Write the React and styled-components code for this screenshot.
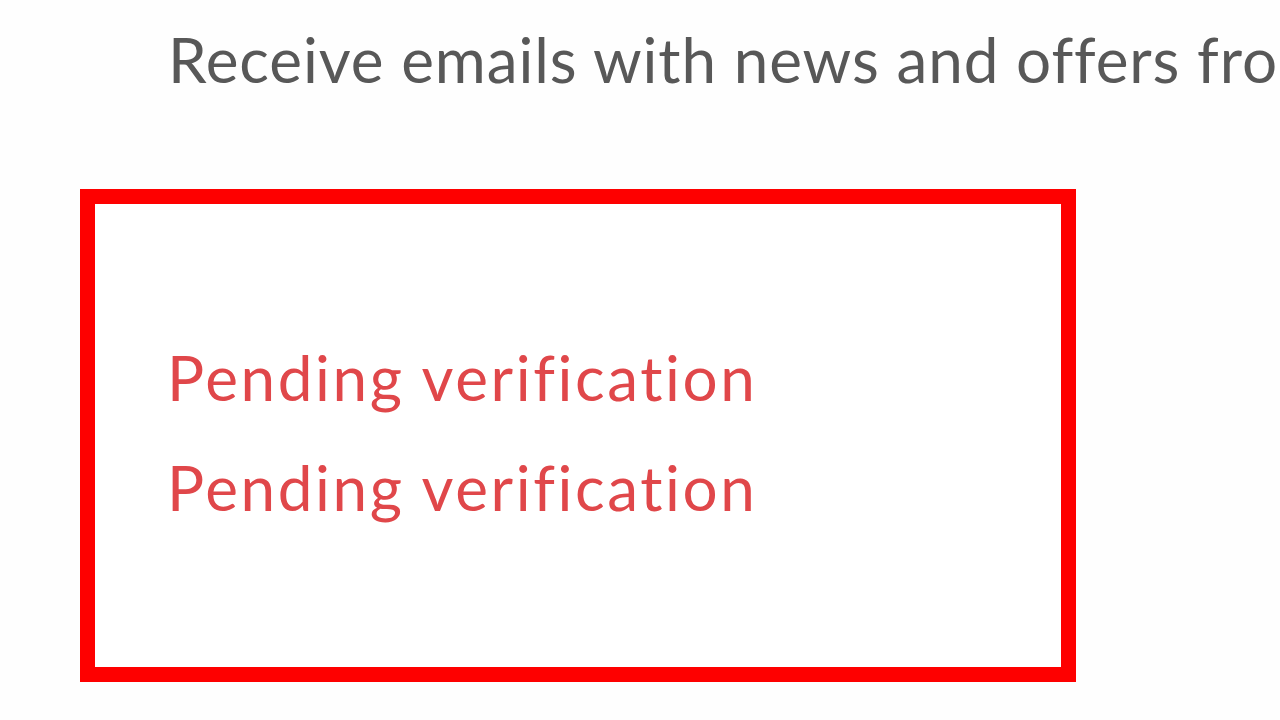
import styled, { createGlobalStyle } from "styled-components";

const GlobalStyle = createGlobalStyle`
  html, body {
    margin: 0;
    padding: 0;
    background: #fefefe;
    overflow: hidden;
  }
  body {
    font-family: Lato, "Noto Sans", sans-serif;
  }
`;

export default function App() {
  return (
    <>
      <GlobalStyle />
      <StyledPage>
        <StyledOptIn>Receive emails with news and offers from us</StyledOptIn>
        <StyledHighlight>
          <StyledStatus>Pending verification</StyledStatus>
          <StyledStatus>Pending verification</StyledStatus>
        </StyledHighlight>
      </StyledPage>
    </>
  );
}

// Styled components

const StyledPage = styled.div`
  width: 1280px;
  height: 720px;
  overflow: hidden;
  display: flex;
  flex-direction: column;
`;

const StyledOptIn = styled.p`
  margin: 20px 0 0 168px;
  font-size: 62px;
  line-height: 78px;
  font-weight: 400;
  letter-spacing: 0.9px;
  color: #585858;
  white-space: nowrap;
  font-variant-ligatures: no-common-ligatures;
`;

const StyledHighlight = styled.div`
  margin: 91px 0 0 80px;
  width: 996px;
  height: 493px;
  box-sizing: border-box;
  border: 15px solid #fe0000;
  background: #fff;
  padding: 134px 0 0 72px;
  display: flex;
  flex-direction: column;
  gap: 32px;
`;

const StyledStatus = styled.div`
  font-size: 62px;
  line-height: 78px;
  letter-spacing: 2.6px;
  color: #e0474a;
  white-space: nowrap;
  font-variant-ligatures: no-common-ligatures;
`;
